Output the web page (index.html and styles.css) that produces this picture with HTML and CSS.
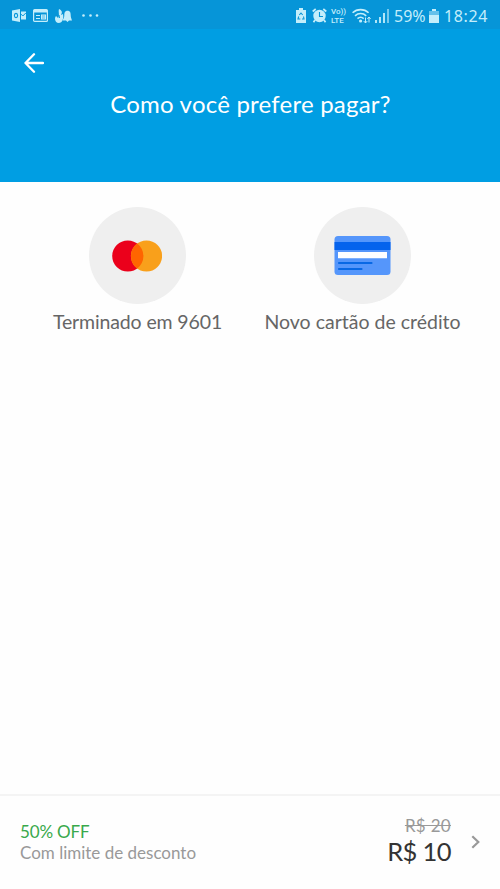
FILE: index.html
```html
<!DOCTYPE html>
<html lang="pt-BR">
<head>
<meta charset="utf-8">
<meta name="viewport" content="width=device-width, initial-scale=1">
<title>Como você prefere pagar?</title>
<link rel="stylesheet" href="styles.css">
</head>
<body>
<div class="app">
  <div class="status">
    <div class="notifications">
      <svg width="14" height="13" viewBox="0 0 14 13"><path fill="currentColor" d="M0 1.5 8 0v13L0 11.5z"/><path fill="currentColor" d="M9 2.5h5v8H9z"/><ellipse cx="4" cy="6.5" rx="1.6" ry="2.1" fill="none" stroke="#0695d8" stroke-width="1.1"/><path d="m8.8 5 2 2 3-3" fill="none" stroke="#0695d8"/></svg>
      <svg width="15" height="13" viewBox="0 0 15 13"><rect x=".6" y=".6" width="13.8" height="11.8" rx="1" fill="none" stroke="currentColor" stroke-width="1.2"/><path fill="currentColor" d="M1 1h13v2.5H1zM8 5.5h5v5H8z"/><path d="M3 6.5h4M3 9.5h4" stroke="currentColor"/><path d="M9 7h3M9 9h3" stroke="#0695d8" stroke-width=".6"/></svg>
      <svg width="17" height="14" viewBox="0 0 17 14"><path fill="currentColor" d="M4 0c4 2 3 4 2 6l2-1c1 5-1 9-4 9-4 0-5-5-3-7l2 2c2-3 0-5 1-9z"/><path fill="currentColor" d="M12.5 1.8c2.7 0 3.2 2.2 3.2 4.2 0 2 .4 3 1.3 5.5H7.5C9 9 9.3 8 9.3 6c0-2 .6-4.2 3.2-4.2zM11 11.5h3l-1.5 1.5z"/><path d="m4 6 .5 3" stroke="#0695d8"/></svg>
      <svg class="more" width="17" height="3" viewBox="0 0 17 3"><g fill="currentColor"><circle cx="1.5" cy="1.5" r="1.3"/><circle cx="8.5" cy="1.5" r="1.3"/><circle cx="15" cy="1.5" r="1.3"/></g></svg>
    </div>
    <div class="system">
      <svg class="saver" width="10" height="15" viewBox="0 0 10 15"><path fill="currentColor" d="M3 0h4v2h3v13H0V2h3z"/><path d="m3.3 7 1.7-2 1.7 2M7.5 8.5 8 11H6M4.3 11H2l.7-2.5" fill="none" stroke="#0695d8" stroke-width="1.1"/></svg>
      <svg class="alarm" width="15" height="15" viewBox="0 0 15 15"><circle cx="7.5" cy="8" r="6.2" fill="currentColor"/><path d="m.7 3.5 3-2.5m7.6 0 3 2.5M3 12l-1.5 2.3M12 12l1.5 2.3" stroke="currentColor" stroke-width="1.7"/><path d="M7.5 4v4.5H11" fill="none" stroke="#0695d8" stroke-width="1.1"/></svg>
      <span class="volte"><span>Vo))</span><span>LTE</span></span>
      <svg class="wifi" width="19" height="16" viewBox="0 0 19 16"><g fill="none" stroke="currentColor" stroke-width="1.6"><path d="M.6 4.8c4.4-4.3 11.6-4.3 16 0M3 7.8c3.3-3 8-3 11.2 0M5.5 10.6c2-1.7 4.3-1.7 6.2 0"/><path stroke-width="1" d="M13.5 9.5V15m-1.8-2 1.8 2 1.8-2M17 14.5V9m-1.6 2L17 9l1.6 2"/></g><circle cx="8.6" cy="13" r="1.6" fill="currentColor"/></svg>
      <svg class="signal" width="14" height="14" viewBox="0 0 14 14"><path stroke="currentColor" stroke-width="1.8" d="M1 14v-3M5 14V8M9 14V4"/><path d="M13 14V0" stroke="currentColor" stroke-width="1.6" opacity=".75"/></svg>
      <span class="percent">59%</span>
      <svg class="battery" width="10" height="14" viewBox="0 0 10 14"><path fill="currentColor" opacity=".5" d="M3 0h4v2h3v4H0V2h3z"/><path fill="currentColor" d="M0 6h10v8H0zM3 0h4v2H3z"/></svg>
      <span class="time">18:24</span>
    </div>
  </div>
  <header class="header">
    <svg class="back" width="20" height="20" viewBox="0 0 20 20"><path d="M19 10H1.5M10 1.3 1.5 10l8.5 8.7" fill="none" stroke="currentColor" stroke-width="2.3" stroke-linecap="round" stroke-linejoin="round"/></svg>
    <h1>Como você prefere pagar?</h1>
  </header>
  <main class="options">
    <div class="option">
      <div class="disc"><svg class="brand" width="50" height="32" viewBox="0 0 50 32"><circle cx="15.8" cy="16" r="15.6" fill="#eb001b"/><circle cx="34.5" cy="16" r="15.6" fill="#f9a01b"/><path d="M25.15 3.5a15.6 15.6 0 0 1 0 25 15.6 15.6 0 0 1 0-25z" fill="#ff6500"/></svg></div>
      <span class="label saved">Terminado em 9601</span>
    </div>
    <div class="option">
      <div class="disc"><svg width="57" height="39" viewBox="0 0 57 39"><rect x=".5" width="56" height="39" rx="3.5" fill="#5596fb"/><path fill="#0563ed" d="M.5 6h56v8H.5z"/><path fill="#fff" d="M4 16h49v6.3H4z"/><path d="M5 27h32.5M5 33h22.5" stroke="#0868e5" stroke-width="2.2" stroke-linecap="round"/></svg></div>
      <span class="label">Novo cartão de crédito</span>
    </div>
  </main>
  <footer class="summary">
    <div class="discount">
      <span class="off">50% OFF</span>
      <span class="limit">Com limite de desconto</span>
    </div>
    <div class="prices">
      <span class="old">R$ 20</span>
      <span class="total">R$ 10</span>
    </div>
    <svg class="chevron" width="9" height="14" viewBox="0 0 9 14"><path d="m1.3 1.2 6 5.8-6 5.8" fill="none" stroke="currentColor" stroke-width="2.2"/></svg>
  </footer>
</div>
</body>
</html>
```
FILE: styles.css
```css
* { box-sizing: border-box; }
body { margin: 0; background: #fefefe; font-family: Lato, "Open Sans", sans-serif; }
svg { display: block; flex: none; }
span { white-space: nowrap; }
.app { display: flex; flex-direction: column; height: 889px; }
.status { display: flex; justify-content: space-between; height: 29px; padding: 2px 12px 0 12px; background: #0695d8; color: #c4eefb; }
.notifications, .system { display: flex; align-items: center; }
.notifications { gap: 7px; }
.more { margin-left: 3px; }
.alarm { margin-left: 6px; }
.volte { display: flex; flex-direction: column; width: 16px; margin-left: 4px; font: 500 8px/9px Roboto, sans-serif; }
.wifi { margin-left: 5px; }
.signal { margin-left: 4px; }
.percent { width: 31px; margin-left: 5px; font: 16px/20px "Noto Sans", sans-serif; }
.battery { margin-left: 4px; }
.time { width: 44px; margin-left: 5px; font: 16px/20px "Noto Sans", sans-serif; letter-spacing: .6px; }
.header { height: 153px; padding: 24px 24px 0; background: #009ee3; color: #fff; }
h1 { margin: 16px 0 0; padding-left: 1px; text-align: center; font-size: 24px; line-height: 30px; font-weight: 400; letter-spacing: .22px; white-space: nowrap; }
.options { display: grid; grid-template-columns: 225px 225px; justify-content: center; flex: 1; padding-top: 25px; }
.option { display: flex; flex-direction: column; align-items: center; }
.disc { display: flex; align-items: center; justify-content: center; width: 97px; height: 97px; border-radius: 50%; background: #efefef; }
.brand { margin-right: 1px; }
.label { margin-top: 6px; font-size: 19.5px; line-height: 24px; color: #666; }
.saved { letter-spacing: -.13px; }
.summary { display: flex; height: 95px; padding: 20px 20px 0; border-top: 2px solid #f4f4f4; }
.discount { display: flex; flex-direction: column; flex: 1; padding-top: 5px; font-size: 17px; line-height: 21px; }
.off { letter-spacing: -.15px; color: #39a94b; }
.limit { color: #999; }
.prices { display: flex; flex-direction: column; align-items: flex-end; }
.old { font-size: 17px; line-height: 19px; letter-spacing: .3px; color: #999; text-decoration: line-through; }
.total { font-size: 25.5px; line-height: 32px; letter-spacing: -.6px; color: #333; }
.chevron { margin: 19px 0 0 20px; color: #999; }
```
